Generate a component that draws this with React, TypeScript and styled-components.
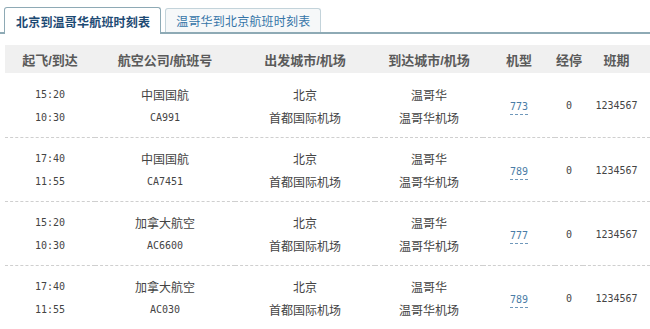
import React, { FC } from 'react';
import styled, { createGlobalStyle } from 'styled-components';

interface Flight {
   depart: string;
   arrive: string;
   airline: string;
   code: string;
   model: string;
   stops: number;
   days: string;
}

const flights: Flight[] = [
   { depart: '15:20', arrive: '10:30', airline: '中国国航', code: 'CA991', model: '773', stops: 0, days: '1234567' },
   { depart: '17:40', arrive: '11:55', airline: '中国国航', code: 'CA7451', model: '789', stops: 0, days: '1234567' },
   { depart: '15:20', arrive: '10:30', airline: '加拿大航空', code: 'AC6600', model: '777', stops: 0, days: '1234567' },
   { depart: '17:40', arrive: '11:55', airline: '加拿大航空', code: 'AC030', model: '789', stops: 0, days: '1234567' }
];

const columns = [
   { title: '起飞/到达', width: 90 },
   { title: '航空公司/航班号', width: 140 },
   { title: '出发城市/机场', width: 140 },
   { title: '到达城市/机场', width: 108 },
   { title: '机型', width: 72 },
   { title: '经停', width: 28 },
   { title: '班期', width: 67 }
];

const App: FC = (): JSX.Element => (
   <Page>
      <GlobalStyle />
      <TabBar>
         <Tab active>北京到温哥华航班时刻表</Tab>
         <Tab>温哥华到北京航班时刻表</Tab>
      </TabBar>
      <Table>
         <colgroup>
            {columns.map(c => (
               <col key={c.title} style={{ width: c.width }} />
            ))}
         </colgroup>
         <thead>
            <tr>
               {columns.map(c => (
                  <Th key={c.title}>{c.title}</Th>
               ))}
            </tr>
         </thead>
         <tbody>
            {flights.map((f, i) => (
               <Row key={i}>
                  <Td>
                     <Line mono>{f.depart}</Line>
                     <Line mono>{f.arrive}</Line>
                  </Td>
                  <Td>
                     <Line>{f.airline}</Line>
                     <Line mono>{f.code}</Line>
                  </Td>
                  <Td>
                     <Line>北京</Line>
                     <Line>首都国际机场</Line>
                  </Td>
                  <Td>
                     <Line>温哥华</Line>
                     <Line>温哥华机场</Line>
                  </Td>
                  <Td>
                     <Model>{f.model}</Model>
                  </Td>
                  <Td>
                     <Line mono>{f.stops}</Line>
                  </Td>
                  <Td>
                     <Line mono>{f.days}</Line>
                  </Td>
               </Row>
            ))}
         </tbody>
      </Table>
   </Page>
);

export default App;

const GlobalStyle = createGlobalStyle`
   body {
      margin: 0;
      background: #fff;
      overflow: hidden;
      font-family: "Liberation Sans", "Noto Sans CJK SC", sans-serif;
   }
`;

const Page = styled.div`
   width: 650px;
   height: 329px;
   overflow: hidden;
`;

const TabBar = styled.div`
   display: flex;
   align-items: flex-end;
   gap: 4px;
   height: 32px;
   padding-left: 4px;
   border-bottom: 2px solid #8eaab5;
`;

const Tab = styled.div<{ active?: boolean }>`
   display: flex;
   align-items: center;
   box-sizing: border-box;
   height: ${p => (p.active ? '27px' : '24px')};
   padding: 0 10px 0 ${p => (p.active ? '11px' : '10px')};
   margin-bottom: ${p => (p.active ? '-2px' : '0')};
   border: 1px solid ${p => (p.active ? '#8eaab5' : '#c3d3da')};
   border-bottom: none;
   border-radius: 3px 3px 0 0;
   background: ${p => (p.active ? '#fff' : '#f6f8f9')};
   color: ${p => (p.active ? '#1d4a74' : '#3575a8')};
   font-size: 12px;
   font-weight: ${p => (p.active ? 'bold' : 'normal')};
   letter-spacing: 0.2px;
`;

const Table = styled.table`
   margin: 11px 0 0 5px;
   width: 645px;
   table-layout: fixed;
   border-collapse: collapse;
`;

const Th = styled.th`
   height: 28px;
   padding: 0;
   background: #f0f0f0;
   color: #5a5a5a;
   font-size: 13px;
   font-weight: bold;
   text-align: center;
   white-space: nowrap;
`;

const Row = styled.tr`
   height: 64px;
   border-bottom: 1px dashed #cfcfcf;
`;

const Td = styled.td`
   padding: 2px 0 0;
   text-align: center;
   vertical-align: middle;
   color: #444;
`;

const Line = styled.div<{ mono?: boolean }>`
   height: 23px;
   line-height: 23px;
   font-size: ${p => (p.mono ? '10px' : '12px')};
   font-family: ${p =>
      p.mono ? '"DejaVu Sans Mono", "Liberation Mono", monospace' : '"Noto Sans CJK SC", sans-serif'};
   white-space: nowrap;
`;

const Model = styled.span`
   display: inline-block;
   line-height: 13px;
   font-family: "DejaVu Sans Mono", "Liberation Mono", monospace;
   font-size: 10px;
   color: #4a7ca6;
   border-bottom: 1px dashed #6f98bb;
   padding-bottom: 1px;
`;
